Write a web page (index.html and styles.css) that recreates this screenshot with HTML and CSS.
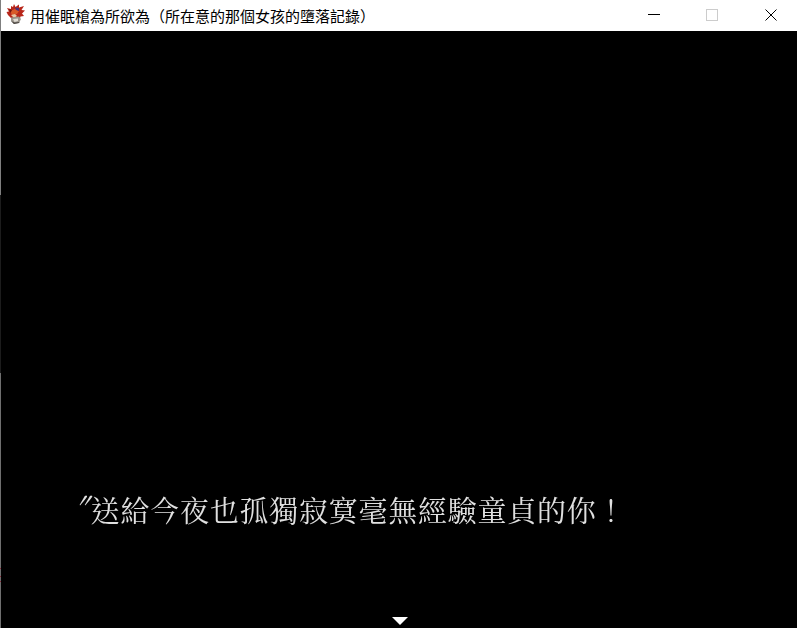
FILE: index.html
```html
<!DOCTYPE html>
<html lang="zh-Hant">
<head>
<meta charset="utf-8">
<title>用催眠槍為所欲為</title>
<link rel="stylesheet" href="styles.css">
</head>
<body>
<div class="window">
  <div class="edge"></div>
  <div class="pane">
    <header class="titlebar">
      <svg class="app-icon" viewBox="0 0 20 20" width="20" height="20" aria-hidden="true">
        <path d="M8 0 L9.5 3 L13 0.5 L13 3.5 L18 2 L15.5 6 L19 6.5 L16 9.5 L18 12 L14.5 12.5 L13.5 16 L9 14 L5 14 L2 11 L0.5 8 L3 7.5 L1 4 L5 5 L5 2 L7 3 Z" fill="#b8261a"/>
        <path d="M4 7 L9 5 L13 7 L11 10 L6 11 Z" fill="#d85a28"/>
        <path d="M9 3.5 L13 4 L13 7 L10 6 Z" fill="#4b2f78"/>
        <path d="M3 5 L6 6 L4.5 9 Z" fill="#6e1410"/>
        <path d="M5 11 L9 10 L11 12 L8 14 Z" fill="#e8c8a4"/>
        <path d="M5 13.5 L13 12.5 L15 15 L13 19 L8 20 L5 17 Z" fill="#9a948b"/>
        <path d="M7 15 L12 14.5 L12 17 L8.5 18 Z" fill="#e0dcd4"/>
        <path d="M5 17 L8 20 L13 19 L13.5 18 L8.5 18.5 Z" fill="#4a4642"/>
      </svg>
      <span class="title">用催眠槍為所欲為（所在意的那個女孩的墮落記錄）</span>
      <div class="controls">
        <span class="ctl"><svg width="12" height="11" viewBox="0 0 12 11"><path d="M0 5.5H12" stroke="#000" stroke-width="1"/></svg></span>
        <span class="ctl"><svg width="12" height="12" viewBox="0 0 12 12"><rect x="0.5" y="0.5" width="11" height="11" fill="none" stroke="#ccc" stroke-width="1"/></svg></span>
        <span class="ctl ctl-close"><svg width="12" height="12" viewBox="0 0 12 12"><path d="M0.5 0.5L11.5 11.5M11.5 0.5L0.5 11.5" stroke="#000" stroke-width="1"/></svg></span>
      </div>
    </header>
    <main class="stage">
      <p class="message"><span class="quote">″</span>送給今夜也孤獨寂寞毫無經驗童貞的你！</p>
      <div class="pause-arrow"></div>
    </main>
  </div>
</div>
</body>
</html>
```
FILE: styles.css
```css
html, body {
  margin: 0;
  padding: 0;
  height: 100%;
  overflow: hidden;
  background: #000;
}
.window {
  width: 797px;
  height: 628px;
  display: flex;
  overflow: hidden;
}
.edge {
  width: 1px;
  flex: none;
  background: linear-gradient(to bottom,
    #7f7f7f 0, #7f7f7f 195px,
    #1c1c1c 195px, #1c1c1c 373px,
    #6f6f6f 373px, #6f6f6f 568px,
    #8a2a3a 568px, #8a2a3a 569px,
    #6f6f6f 569px, #6f6f6f 576px,
    #8a2a3a 576px, #8a2a3a 577px,
    #6f6f6f 577px, #6f6f6f 581px,
    #8a2a3a 581px, #8a2a3a 582px,
    #6f6f6f 582px, #6f6f6f 628px);
}
.pane {
  flex: 1;
  min-width: 0;
  display: flex;
  flex-direction: column;
}
.titlebar {
  height: 31px;
  flex: none;
  background: #fff;
  display: flex;
  align-items: center;
  padding-left: 5px;
}
.app-icon { flex: none; margin-right: 4px; margin-bottom: 3px; }
.title {
  font: 15px/30px "Noto Sans CJK TC", sans-serif;
  color: #000;
  white-space: nowrap;
}
.controls {
  margin-left: auto;
  margin-right: -3px;
  align-self: flex-start;
  display: flex;
}
.ctl {
  width: 58px;
  height: 31px;
  padding-top: 9px;
  box-sizing: border-box;
  display: flex;
  justify-content: center;
}
.ctl-close { width: 59px; }
.ctl svg { display: block; }
.stage {
  flex: 1;
  background: #000;
  position: relative;
  display: flex;
  flex-direction: column;
  align-items: flex-start;
}
.message {
  margin: 461px 0 0 60px;
  font: 400 29px/36px "Noto Serif CJK TC", "Noto Sans CJK TC", serif;
  letter-spacing: 0.75px;
  color: #e0e0e0;
  white-space: nowrap;
  filter: blur(0.4px);
}
.quote {
  display: inline-block;
  width: 29.75px;
  letter-spacing: 0;
  text-align: center;
  transform: translate(7px, -3px) skewX(-28deg);
}
.pause-arrow {
  position: absolute;
  left: 391px;
  bottom: 3px;
  width: 0;
  height: 0;
  border-left: 8px solid transparent;
  border-right: 8px solid transparent;
  border-top: 8px solid #fff;
  filter: blur(0.5px);
}
```
